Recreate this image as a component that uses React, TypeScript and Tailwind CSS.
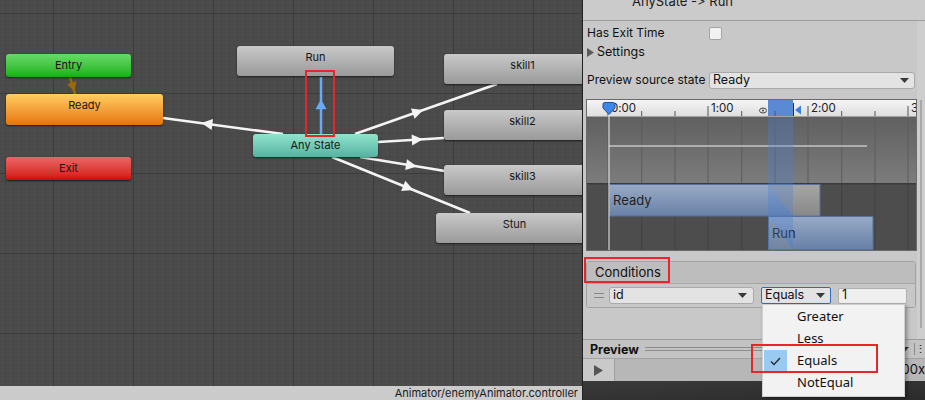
import React from "react";

type Pt = [number, number];

// arrow head polygon placed at fraction t along a->b, pointing toward b
const arrowHead = (a: Pt, b: Pt, t: number, len = 11, half = 5.5) => {
  const dx = b[0] - a[0];
  const dy = b[1] - a[1];
  const d = Math.hypot(dx, dy);
  const ux = dx / d;
  const uy = dy / d;
  const tx = a[0] + dx * t;
  const ty = a[1] + dy * t;
  const bx = tx - ux * len;
  const by = ty - uy * len;
  return `${tx},${ty} ${bx - uy * half},${by + ux * half} ${bx + uy * half},${by - ux * half}`;
};

const TRANSITIONS: { from: Pt; to: Pt; t: number }[] = [
  { from: [283, 134], to: [163, 118], t: 0.68 },
  { from: [355, 134], to: [497, 84], t: 0.48 },
  { from: [378, 142], to: [444, 138], t: 0.68 },
  { from: [360, 157], to: [445, 171], t: 0.67 },
  { from: [332, 157], to: [470, 213], t: 0.59 },
];

const NODES = [
  { label: "Entry", cls: "left-[6px] top-[54px] w-[125px] h-[23px] from-[#68da68] to-[#0ab20a]" },
  { label: "Ready", cls: "left-[6px] top-[94px] w-[157px] h-[31px] from-[#ffcd5e] to-[#e57500]" },
  { label: "Exit", cls: "left-[6px] top-[157px] w-[125px] h-[23px] from-[#ea6464] to-[#d40000]" },
  { label: "Run", cls: "left-[237px] top-[46px] w-[157px] h-[30px] from-[#c9c9c9] to-[#9a9a9a]" },
  { label: "Any State", cls: "left-[253px] top-[134px] w-[125px] h-[23px] from-[#90e4cc] to-[#56b2a2]" },
  { label: "skill1", cls: "left-[444px] top-[54px] w-[157px] h-[30px] from-[#c9c9c9] to-[#9a9a9a]" },
  { label: "skill2", cls: "left-[444px] top-[110px] w-[157px] h-[30px] from-[#c9c9c9] to-[#9a9a9a]" },
  { label: "skill3", cls: "left-[444px] top-[165px] w-[157px] h-[30px] from-[#c9c9c9] to-[#9a9a9a]" },
  { label: "Stun", cls: "left-[436px] top-[213px] w-[157px] h-[30px] from-[#c9c9c9] to-[#9a9a9a]" },
];

const TRACK_LINES = [22, 55.7, 89, 122, 155.7, 189, 222, 255.7, 289, 322];

function Caret() {
  return (
    <svg width="9" height="5" viewBox="0 0 9 5" className="shrink-0">
      <path d="M0 0 H9 L4.5 5 Z" fill="#3a3a3a" />
    </svg>
  );
}

function Canvas() {
  return (
    <div className="relative flex-1 overflow-hidden bg-[#4b4b4b]">
      <svg width="582" height="386" className="absolute left-0 top-0">
        <defs>
          <pattern id="minor" x="5" y="5" width="8" height="8" patternUnits="userSpaceOnUse">
            <path d="M0 0 H8 M0 0 V8" stroke="#434343" strokeWidth="1" fill="none" />
          </pattern>
          <pattern id="major" x="53" y="13" width="80" height="80" patternUnits="userSpaceOnUse">
            <path d="M0 0 H80 M0 0 V80" stroke="#383838" strokeWidth="1.5" fill="none" />
          </pattern>
        </defs>
        <rect width="582" height="386" fill="url(#minor)" />
        <rect width="582" height="386" fill="url(#major)" />

        {/* entry -> ready */}
        <line x1="70" y1="77" x2="75" y2="94" stroke="#9b6a0c" strokeWidth="2.5" />
        <polygon points={arrowHead([70, 77], [76, 96], 0.75, 9, 5)} fill="#9b6a0c" />

        {TRANSITIONS.map((tr, i) => (
          <g key={i}>
            <line x1={tr.from[0]} y1={tr.from[1]} x2={tr.to[0]} y2={tr.to[1]} stroke="#f4f4f4" strokeWidth="2.5" />
            <polygon points={arrowHead(tr.from, tr.to, tr.t)} fill="#f4f4f4" />
          </g>
        ))}

        {/* selected any state -> run */}
        <line x1="321" y1="134" x2="321" y2="77" stroke="#68aaf8" strokeWidth="2.5" />
        <polygon points={arrowHead([321, 134], [321, 77], 0.61, 10, 5.5)} fill="#68aaf8" />
      </svg>

      {NODES.map(n => (
        <div
          key={n.label}
          className={`absolute ${n.cls} bg-linear-to-b rounded-[3px] shadow-[0_1px_2px_rgba(0,0,0,0.6)] text-center pt-[4px] text-[11px] leading-[14px] text-[#161616] font-['Inter',sans-serif]`}
        >
          {n.label}
        </div>
      ))}

      <div className="absolute left-[305px] top-[70px] w-[30px] h-[67px] border-2 border-[#e8262a]" />
    </div>
  );
}

function Timeline() {
  return (
    <svg width="331" height="152" className="block font-['Inter',sans-serif]">
      <defs>
        <linearGradient id="ruler" x1="0" y1="0" x2="0" y2="1">
          <stop offset="0" stopColor="#f7f7f7" />
          <stop offset="1" stopColor="#dcdcdc" />
        </linearGradient>
        <linearGradient id="upper" x1="0" y1="0" x2="0" y2="1">
          <stop offset="0" stopColor="#606060" />
          <stop offset="1" stopColor="#7c7c7c" />
        </linearGradient>
        <linearGradient id="clip" x1="0" y1="0" x2="0" y2="1">
          <stop offset="0" stopColor="#98aac5" />
          <stop offset="1" stopColor="#6981a8" />
        </linearGradient>
        <linearGradient id="grayclip" x1="0" y1="0" x2="0" y2="1">
          <stop offset="0" stopColor="#a6a6a6" />
          <stop offset="1" stopColor="#888888" />
        </linearGradient>
      </defs>
      <rect width="331" height="152" fill="#4d4d4d" />
      <rect width="331" height="18" fill="url(#ruler)" />
      <line x1="0" y1="17.5" x2="331" y2="17.5" stroke="#a2a2a2" />
      <rect y="18" width="331" height="66" fill="url(#upper)" />
      <rect y="84" width="331" height="1.5" fill="#3a3a3a" />
      {TRACK_LINES.map(x => (
        <g key={x}>
          <line x1={x} y1="18" x2={x} y2="84" stroke="#5c5c5c" />
          <line x1={x} y1="86" x2={x} y2="152" stroke="#434343" />
        </g>
      ))}
      <line x1="23" y1="47" x2="281" y2="47" stroke="#c4c4c4" strokeWidth="1.5" />

      {/* Ready clip */}
      <rect x="23" y="85.5" width="184" height="31.5" fill="url(#clip)" />
      <polygon points="182,85.5 234,85.5 234,117 207,117" fill="url(#grayclip)" />
      <rect x="23.5" y="85.5" width="210.5" height="31.5" fill="none" stroke="#56709a" />
      <text x="27" y="106" fontSize="13" fill="#222">Ready</text>

      {/* Run clip */}
      <rect x="182" y="117" width="105" height="33" fill="url(#clip)" />
      <polygon points="182,117 207,150 182,150" fill="url(#grayclip)" />
      <rect x="182.5" y="117.5" width="104.5" height="33" fill="none" stroke="#56709a" />
      <text x="186" y="139" fontSize="13" fill="#222">Run</text>

      {/* transition highlight */}
      <rect x="182" y="18" width="25" height="134" fill="#4a7fd6" opacity="0.33" />
      <rect x="182" y="0" width="25" height="17" fill="#5a8ad3" />

      {/* ruler ticks */}
      {TRACK_LINES.map((x, i) => (
        <line key={x} x1={x} y1={i % 3 === 0 ? 7 : 12} x2={x} y2="17" stroke="#555" />
      ))}
      <text x="25" y="13" fontSize="11.5" fill="#222">0:00</text>
      <text x="125" y="13" fontSize="11.5" fill="#222">1:00</text>
      <text x="225" y="13" fontSize="11.5" fill="#222">2:00</text>
      <text x="325" y="13" fontSize="11.5" fill="#222">3</text>

      {/* eye + end marker */}
      <ellipse cx="177" cy="11.5" rx="3.5" ry="2.5" fill="none" stroke="#444" strokeWidth="1" />
      <circle cx="177" cy="11.5" r="1" fill="#444" />
      <line x1="207.5" y1="4" x2="207.5" y2="17" stroke="#333" />
      <polygon points="209,11 215,6.5 215,15.5" fill="#3c7ee0" />

      {/* playhead */}
      <line x1="23" y1="14" x2="23" y2="152" stroke="#f2f2f2" strokeWidth="1" />
      <path d="M18.5 3.5 Q17 3.5 17 5.5 V9 L23 15.5 L29 9 V5.5 Q29 3.5 27.5 3.5 Z" fill="#3f86ea" stroke="#1d4f9e" strokeWidth="1" />

      <rect x="0.5" y="0.5" width="330" height="151" fill="none" stroke="#6a6a6a" />
    </svg>
  );
}

function Inspector() {
  return (
    <div className="relative w-[343px] h-full flex flex-col bg-[#c8c8c8] border-l border-[#222] text-[12px] text-[#101010] font-['Inter',sans-serif] [font-feature-settings:'calt'_0]">
      {/* header */}
      <div className="h-[21px] shrink-0 bg-[#cbcbcb] border-b border-[#9d9d9d] overflow-hidden">
        <div className="pl-[49px] -mt-[7px] text-[13px] leading-[16px] text-[#1a1a1a] whitespace-nowrap">AnyState -&gt; Run</div>
      </div>

      <div className="flex flex-1 min-h-0">
        <div className="flex-1 flex flex-col pl-[3px]">
          <div className="h-[24px] flex items-center">
            <span className="pl-[1px] w-[123px] text-[12px] whitespace-nowrap">Has Exit Time</span>
            <div className="w-[13px] h-[13px] bg-[#f2f2f2] border border-[#a5a5a5] rounded-[2px]" />
          </div>

          <div className="h-[14px] flex items-center pl-[1px]">
            <svg width="7" height="9" viewBox="0 0 7 9" className="mr-[3px]">
              <path d="M0 0 L7 4.5 L0 9 Z" fill="#5a5a5a" />
            </svg>
            <span className="text-[12.5px]">Settings</span>
          </div>

          <div className="mt-[12px] h-[18px] flex items-center">
            <span className="pl-[1px] w-[123px] shrink-0 text-[12px] whitespace-nowrap">Preview source state</span>
            <div className="w-[206px] h-[17px] bg-[#e3e3e3] border border-[#a9a9a9] rounded-[3px] flex items-center justify-between pl-[3px] pr-[5px]">
              <span className="text-[12.5px]">Ready</span>
              <Caret />
            </div>
          </div>

          <div className="mt-[10px]">
            <Timeline />
          </div>

          {/* conditions */}
          <div className="mt-[10px] w-[330px] rounded-[3px] border border-[#a2a2a2] overflow-hidden">
            <div className="h-[22px] bg-[#bdbdbd] border-b border-[#a7a7a7] flex items-center pl-[8px] text-[13px]">
              Conditions
            </div>
            <div className="h-[23px] bg-[#c7c7c7] flex items-center">
              <div className="w-[22px] flex flex-col items-center gap-[3px] pl-[1px]">
                <div className="w-[10px] h-[1px] bg-[#888]" />
                <div className="w-[10px] h-[1px] bg-[#888]" />
              </div>
              <div className="w-[145px] h-[17px] bg-[#e3e3e3] border border-[#a9a9a9] rounded-[3px] flex items-center justify-between pl-[3px] pr-[6px]">
                <span className="text-[12.5px]">id</span>
                <Caret />
              </div>
              <div className="ml-[7px] w-[70px] h-[17px] bg-[#e3e3e3] border border-[#2f6bc6] rounded-[2px] flex items-center justify-between pl-[3px] pr-[5px]">
                <span className="text-[12.5px]">Equals</span>
                <Caret />
              </div>
              <div className="ml-[7px] w-[69px] h-[16px] bg-[#efefef] border border-[#b0b0b0] rounded-[2px] flex items-center pl-[3px]">
                <span className="text-[12.5px]">1</span>
              </div>
            </div>
          </div>
        </div>

        {/* scroll strip */}
        <div className="w-[8px] bg-[#cecece]">
          <div className="ml-[3px] mt-[79px] w-[2px] h-[228px] bg-[#a8a8a8]" />
        </div>
      </div>

      {/* preview */}
      <div className="h-[61px] shrink-0 flex flex-col">
        <div className="h-[19px] bg-[#c3c3c3] border-t border-[#9c9c9c] flex items-center">
          <span className="pl-[7px] pt-[2px] font-bold text-[12.5px]">Preview</span>
          <div className="ml-[6px] w-[130px] h-[4px] border-y border-[#8c8c8c]" />
          <div className="flex-1" />
          <Caret />
          <div className="w-[1px] h-[12px] ml-[5px] bg-[#8c8c8c]" />
          <span className="w-[10px] text-center text-[11px] leading-[12px]">⋮</span>
        </div>
        <div className="h-[23px] bg-[#b7b7b7] flex items-center border-t border-[#a2a2a2]">
          <div className="w-[32px] h-full bg-[#c9c9c9] border-r border-[#a0a0a0] flex items-center justify-center">
            <svg width="9" height="11" viewBox="0 0 9 11">
              <path d="M0 0 L9 5.5 L0 11 Z" fill="#555" />
            </svg>
          </div>
          <div className="flex-1" />
          <span className="text-[13px] whitespace-nowrap">1.00x</span>
        </div>
        <div className="flex-1 bg-linear-to-br from-[#3a3a3a] to-[#2b2b2b]" />
      </div>

      {/* conditions red mark */}
      <div className="absolute left-[1px] top-[257px] w-[86px] h-[26px] border-2 border-[#e8262a]" />
    </div>
  );
}

function OperatorMenu() {
  const items = ["Greater", "Less", "Equals", "NotEqual"];
  return (
    <div className="absolute left-[762px] top-[304px] w-[143px] h-[93px] bg-[#f2f2f2] border border-[#cfcfcf] shadow-[2px_2px_4px_rgba(0,0,0,0.35)] pt-[1px] font-['Noto_Sans','Inter',sans-serif] text-[13px] text-[#111]">
      {items.map(it => (
        <div key={it} className="h-[22px] flex items-center">
          <div className={`w-[23px] h-[22px] ml-[1px] flex items-center justify-center ${it === "Equals" ? "bg-[#99caf2]" : ""}`}>
            {it === "Equals" && (
              <svg width="11" height="9" viewBox="0 0 11 9">
                <path d="M1 4.5 L4 7.5 L10 1" fill="none" stroke="#2b2b2b" strokeWidth="1.4" />
              </svg>
            )}
          </div>
          <span className="ml-[10px]">{it}</span>
        </div>
      ))}
    </div>
  );
}

export default function App() {
  return (
    <div className="relative w-[925px] h-[400px] flex overflow-hidden bg-[#4b4b4b]">
      <div className="w-[582px] h-full flex flex-col">
        <Canvas />
        <div className="h-[14px] shrink-0 bg-[#cbcbcb] flex items-center justify-end pr-[4px] text-[11px] leading-[14px] text-[#1a1a1a] font-['Inter',sans-serif]">
          Animator/enemyAnimator.controller
        </div>
      </div>
      <Inspector />
      <OperatorMenu />
      <div className="absolute left-[751px] top-[344px] w-[127px] h-[29px] border-2 border-[#e8262a]" />
    </div>
  );
}
